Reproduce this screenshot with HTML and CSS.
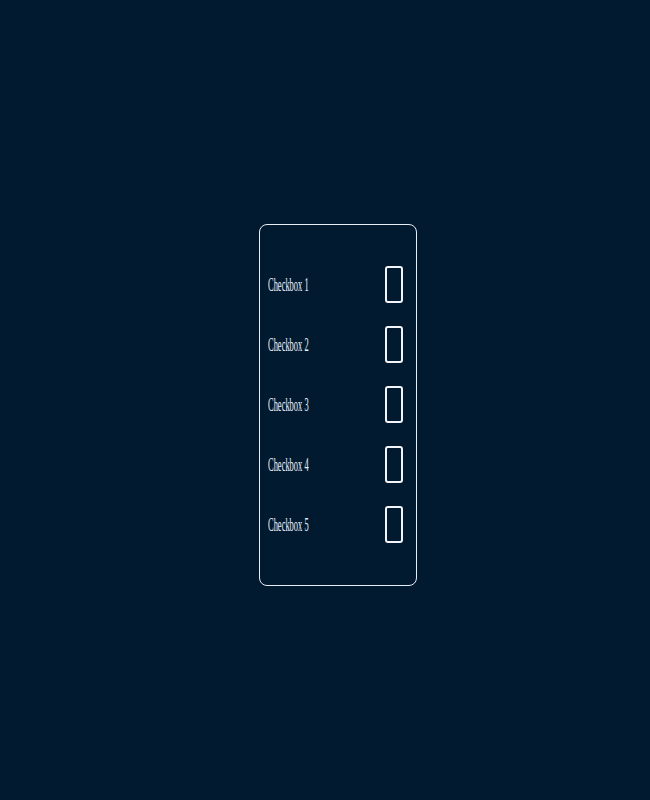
FILE: index.html
```html
<!DOCTYPE html>
<html>
<head>
  <title>Checkboxes</title>
  <link rel="stylesheet" href="styles.css">
</head>
<body>
  <div class="page">
    <div class="card">
      <label class="row">
        <span class="label">Checkbox 1</span>
        <input type="checkbox" class="box">
      </label>
      <label class="row">
        <span class="label">Checkbox 2</span>
        <input type="checkbox" class="box">
      </label>
      <label class="row">
        <span class="label">Checkbox 3</span>
        <input type="checkbox" class="box">
      </label>
      <label class="row">
        <span class="label">Checkbox 4</span>
        <input type="checkbox" class="box">
      </label>
      <label class="row">
        <span class="label">Checkbox 5</span>
        <input type="checkbox" class="box">
      </label>
    </div>
  </div>
</body>
</html>
```

FILE: styles.css
```css
html, body {
  margin: 0;
  background: #021a2f;
}

.page {
  min-height: 100vh;
  box-sizing: border-box;
  padding: 9px 0 0 25px;
  display: flex;
  align-items: center;
  justify-content: center;
}

.card {
  width: 158px;
  box-sizing: border-box;
  border: 1px solid #e8eef5;
  border-radius: 8px;
  padding: 30px 13px 30px 8px;
  display: flex;
  flex-direction: column;
}

.row {
  height: 60px;
  display: flex;
  align-items: center;
  justify-content: space-between;
}

.label {
  font-family: "Liberation Serif", serif;
  font-size: 18px;
  color: #eaf2ff;
  display: inline-block;
  padding-top: 2px;
  transform: scaleX(0.47);
  transform-origin: left center;
  white-space: nowrap;
}

.box {
  appearance: none;
  -webkit-appearance: none;
  margin: 0;
  width: 18px;
  height: 37px;
  box-sizing: border-box;
  border: 2px solid #f2f4f7;
  border-radius: 3px;
  background: transparent;
}
```
